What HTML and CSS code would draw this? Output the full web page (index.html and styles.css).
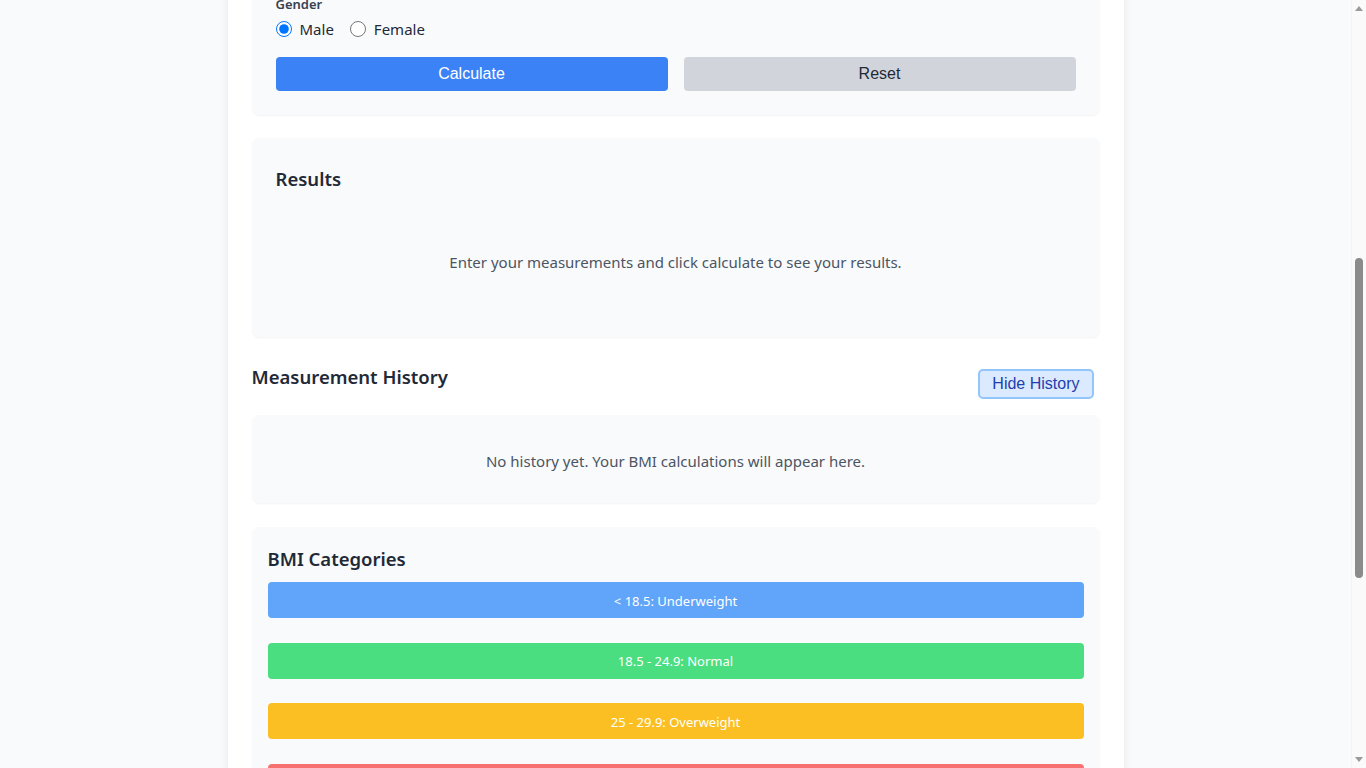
FILE: index.html
```html
<!DOCTYPE html>
<html lang="en">
<head>
<meta charset="utf-8">
<title>BMI Calculator</title>
<link rel="stylesheet" href="styles.css">
</head>
<body>
<main class="app">
  <header class="app-header">
    <h1 class="app-title">BMI Calculator</h1>
    <p class="app-subtitle">Calculate your Body Mass Index and track your progress over time.</p>
  </header>

  <section class="card form-card">
    <h2 class="card-title">Enter Your Details</h2>
    <div class="field">
      <span class="field-label">Unit System</span>
      <div class="radio-row">
        <label class="radio"><input type="radio" name="units" checked> Metric (cm, kg)</label>
        <label class="radio"><input type="radio" name="units"> Imperial (in, lb)</label>
      </div>
    </div>
    <div class="field">
      <label class="field-label" for="height">Height (cm)</label>
      <input class="text-input" id="height" type="number" placeholder="Enter your height">
    </div>
    <div class="field">
      <label class="field-label" for="weight">Weight (kg)</label>
      <input class="text-input" id="weight" type="number" placeholder="Enter your weight">
    </div>
    <div class="field">
      <label class="field-label" for="age">Age</label>
      <input class="text-input" id="age" type="number" placeholder="Enter your age">
    </div>
    <div class="field field-last">
      <span class="field-label gender-label">Gender</span>
      <div class="radio-row">
        <label class="radio"><input type="radio" name="gender" checked> Male</label>
        <label class="radio"><input type="radio" name="gender"> Female</label>
      </div>
    </div>
    <div class="button-row">
      <button class="btn btn-primary" type="button">Calculate</button>
      <button class="btn btn-secondary" type="button">Reset</button>
    </div>
  </section>

  <section class="card results-card">
    <h2 class="card-title">Results</h2>
    <p class="placeholder results-placeholder">Enter your measurements and click calculate to see your results.</p>
  </section>

  <section class="history">
    <div class="history-head">
      <h2 class="section-title">Measurement History</h2>
      <button class="btn-toggle" type="button">Hide History</button>
    </div>
    <div class="card history-card">
      <p class="placeholder">No history yet. Your BMI calculations will appear here.</p>
    </div>
  </section>

  <section class="card categories-card">
    <h2 class="card-title categories-title">BMI Categories</h2>
    <div class="category-list">
      <div class="category cat-under">&lt; 18.5: Underweight</div>
      <div class="category cat-normal">18.5 - 24.9: Normal</div>
      <div class="category cat-over">25 - 29.9: Overweight</div>
      <div class="category cat-obese">≥ 30: Obese</div>
    </div>
  </section>

  <section class="card about-card">
    <h2 class="card-title">About BMI</h2>
    <p class="about-text">Body Mass Index (BMI) is a simple measure that uses your height and weight to work out if your weight is healthy for your height.</p>
    <p class="about-text">BMI does not take into account muscle mass, bone density, overall body composition, and racial and sex differences.</p>
    <p class="about-text">Always consult a healthcare professional for a complete assessment of your health.</p>
  </section>

  <footer class="app-footer">© 2024 BMI Calculator. For informational purposes only.</footer>
</main>

<div class="scrollbar" aria-hidden="true">
  <span class="scroll-arrow scroll-up"></span>
  <span class="scroll-thumb"></span>
  <span class="scroll-arrow scroll-down"></span>
</div>
<script src="script.js"></script>
</body>
</html>
```

FILE: styles.css
```css
* { box-sizing: border-box; }

html, body {
  margin: 0;
  padding: 0;
}

body {
  background: #f9fafb;
  font-family: "Noto Sans", "Open Sans", sans-serif;
  color: #1f2937;
  font-size: 15px;
  line-height: 24px;
  margin-right: 15px;
}

.app {
  width: 896px;
  margin: 0 auto;
  background: #ffffff;
  padding: 24px 24px 24px;
  box-shadow: 0 0 10px rgba(0, 0, 0, 0.07);
  min-height: 100vh;
}

.app-header {
  text-align: center;
  margin-bottom: 24px;
}

.app-title {
  margin: 0 0 8px;
  font-size: 28px;
  line-height: 36px;
  font-weight: 700;
  color: #1f2937;
}

.app-subtitle {
  margin: 0;
  color: #4b5563;
}

.card {
  background: #f9fafb;
  border-radius: 8px;
  box-shadow: 0 1px 2px rgba(0, 0, 0, 0.05);
}

.form-card {
  padding: 24px;
  margin-bottom: 23px;
}

.card-title {
  margin: 0 0 16px;
  font-size: 18.5px;
  line-height: 28px;
  font-weight: 600;
  color: #1f2937;
}

.field {
  margin-bottom: 16px;
  display: flex;
  flex-direction: column;
}

.field-last { margin-bottom: 0; }

.field-label {
  font-size: 13px;
  line-height: 20px;
  font-weight: 600;
  color: #374151;
  margin-bottom: 3px;
}

.text-input {
  height: 42px;
  border: 1px solid #d1d5db;
  border-radius: 4px;
  padding: 8px 12px;
  font-family: inherit;
  font-size: 15px;
  background: #ffffff;
}

.radio-row {
  display: flex;
  gap: 16px;
  height: 24px;
  align-items: center;
}

.radio {
  display: flex;
  align-items: center;
  gap: 8px;
  font-size: 15px;
  color: #1f2937;
}

.radio input {
  margin: 0;
  width: 16px;
  height: 16px;
}

.button-row {
  display: grid;
  grid-template-columns: 1fr 1fr;
  gap: 16px;
  margin-top: 16px;
}

.btn {
  height: 34px;
  border: none;
  border-radius: 4px;
  font-family: "Liberation Sans", Arial, sans-serif;
  font-size: 16px;
}

.btn-primary {
  background: #3b82f6;
  color: #ffffff;
}

.btn-secondary {
  background: #d1d5db;
  color: #1f2937;
}

.results-card {
  padding: 27px 24px 24px;
  margin-bottom: 26px;
}

.placeholder {
  margin: 0;
  text-align: center;
  color: #4b5563;
}

.results-placeholder {
  padding: 41px 0 39px;
}

.history {
  margin-bottom: 24px;
}

.history-head {
  display: flex;
  justify-content: space-between;
  align-items: flex-start;
  margin-bottom: 16px;
}

.section-title {
  margin: 0;
  font-size: 18.5px;
  line-height: 28px;
  font-weight: 600;
  color: #1f2937;
}

.btn-toggle {
  margin: 6px 6px 0 0;
  height: 30px;
  padding: 0 12px;
  background: #dbeafe;
  border: 2px solid #93c5fd;
  border-radius: 5px;
  color: #1e40af;
  font-family: "Liberation Sans", Arial, sans-serif;
  font-size: 16px;
}

.history-card {
  padding: 34px 24px 30px;
}

.categories-card {
  padding: 18px 16px 16px;
  margin-bottom: 24px;
}

.categories-title {
  margin-bottom: 9px;
}

.category-list {
  display: flex;
  flex-direction: column;
  gap: 24.5px;
}

.category {
  height: 36px;
  border-radius: 4px;
  display: flex;
  align-items: center;
  justify-content: center;
  color: #ffffff;
  font-size: 13px;
  line-height: 20px;
  padding-top: 1px;
}

.cat-under { background: #60a5fa; }
.cat-normal { background: #4ade80; }
.cat-over { background: #fbbf24; }
.cat-obese { background: #f87171; }

.about-card {
  padding: 24px;
}

.about-card .card-title { margin-bottom: 12px; }

.about-text {
  margin: 0 0 12px;
  color: #4b5563;
}

.about-text:last-child { margin-bottom: 0; }

.app-footer {
  margin-top: 32px;
  padding-bottom: 24px;
  text-align: center;
  font-size: 13px;
  line-height: 20px;
  color: #6b7280;
}

/* simulated browser scrollbar (overlay) */
.scrollbar {
  position: fixed;
  top: 0;
  right: 0;
  width: 15px;
  height: 100vh;
  background: #fafafa;
  border-left: 1px solid #f3f3f3;
}

.scroll-thumb {
  position: absolute;
  left: 3px;
  top: 258px;
  width: 8px;
  height: 320px;
  border-radius: 4px;
  background: #8b8b8b;
}

.scroll-arrow {
  position: absolute;
  left: 3px;
  width: 0;
  height: 0;
  border-left: 4.5px solid transparent;
  border-right: 4.5px solid transparent;
}

.scroll-up {
  top: 6px;
  border-bottom: 5px solid #9a9a9a;
}

.scroll-down {
  bottom: 6px;
  border-top: 5px solid #9a9a9a;
}
```

FILE: script.js
```js
(function () {
  function align() {
    var label = document.querySelector('.gender-label');
    if (!label) return;
    var top = label.getBoundingClientRect().top + window.scrollY;
    window.scrollTo(0, Math.round(top + 6));
  }
  align();
  window.addEventListener('load', align);
})();
```
